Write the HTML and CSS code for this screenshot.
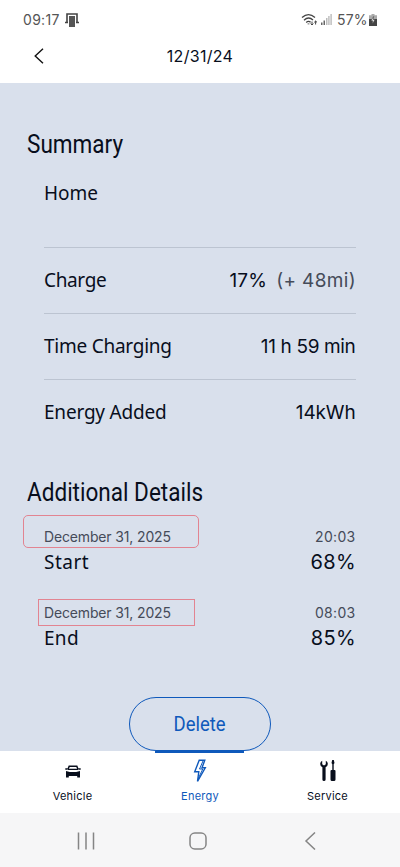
FILE: index.html
```html
<!DOCTYPE html>
<html lang="en">
<head>
<meta charset="utf-8">
<meta name="viewport" content="width=device-width, initial-scale=1">
<title>Charge log</title>
<link rel="stylesheet" href="styles.css">
</head>
<body>
<div class="screen">
  <div class="status">
    <span class="clock">09:17</span>
    <svg class="note" width="14" height="14" viewBox="0 0 14 14"><path d="M2 10V1h10v9M0 9.500h3M11 9.500h3" fill="none" stroke="#444" stroke-width="1.600"/><path d="M4 3h6v11H4z" fill="#555"/></svg>
    <svg class="wifi" width="17" height="14" viewBox="0 0 17 14" fill="none" stroke="#444" stroke-width="1.300"><path d="M1 4.600Q7.500-1.400 14 4.600M3 7.200Q7.500 3 12 7M5.200 9.400Q7.500 7.400 9.600 9.300"/><path d="M7.500 10.500v.8" stroke-width="1.800"/><path d="M11 8.500v3.500m-1.400-1.400L11 12l1.400-1.400M14.600 11.500V8m-1.400 1.400L14.600 8 16 9.400" stroke-width="1"/></svg>
    <svg class="signal" width="11" height="11" viewBox="0 0 11 11"><path d="M0 8.500h1.500V11H0zM2.500 6.500H4V11H2.500z" fill="#666"/><path d="M5 4h1.500v7H5zM7.200 2h1.400v9H7.200zM9.400 0h1.400v11H9.400z" fill="#bbb"/></svg>
    <span class="percent">57%</span>
    <svg class="battery" width="8" height="12" viewBox="0 0 8 12"><path d="M2.500 0h3v1.300H8v4H0v-4h2.500z" fill="#aaa"/><path d="M0 5h8v7H0z" fill="#444"/><path d="M4.600 2.500 2 6.800h1.700l-.4 3L6 5.800H4.300z" fill="#fff" stroke="#444" stroke-width=".6"/></svg>
  </div>
  <header class="bar">
    <svg width="10" height="16" viewBox="0 0 10 16"><path d="M9 .8 1.200 8 9 15.200" fill="none" stroke="#111" stroke-width="1.400"/></svg>
    <h1>12/31/24</h1>
  </header>
  <main>
    <h2 class="summary"><span>Summary</span></h2>
    <section class="rows">
      <div class="row home"><span class="k-home">Home</span></div>
      <div class="row"><span class="k-charge">Charge</span><span class="value"><span class="v-charge">17%</span><span class="miles">(+ 48mi)</span></span></div>
      <div class="row"><span class="k-time">Time Charging</span><span class="v-time">11 h 59 min</span></div>
      <div class="row"><span class="k-energy">Energy Added</span><span class="v-energy">14kWh</span></div>
    </section>
    <h2 class="details"><span>Additional Details</span></h2>
    <section class="events">
      <div class="event">
        <div class="stamp mark-round"><span class="date">December 31, 2025</span><span class="hour">20:03</span></div>
        <div class="level"><span class="k-start">Start</span><span class="v-level">68%</span></div>
      </div>
      <div class="event">
        <div class="stamp mark-square"><span class="date">December 31, 2025</span><span class="hour">08:03</span></div>
        <div class="level"><span class="k-end">End</span><span class="v-level">85%</span></div>
      </div>
    </section>
    <button class="delete"><span>Delete</span></button>
  </main>
  <nav class="tabs">
    <a class="tab"><svg width="16" height="24" viewBox="0 0 16 24"><path d="M3 10.200 4.200 7.200h7.600l1.200 3" fill="none" stroke="#080e1c" stroke-width="1.500"/><path d="M.3 9.300h2.400v1.500H.3zM13.300 9.300h2.400v1.500h-2.400zM3 9.800h10v1.300H3z" fill="#080e1c"/><path d="m1 12 3.800 1h6.400l3.800-1V18.500h-2.800V17H3.800v1.500H1z" fill="#080e1c"/></svg><span class="t-vehicle">Vehicle</span></a>
    <a class="tab active"><svg width="14" height="24" viewBox="0 0 14 24"><path d="M6.200 1.200h5.600L9 8.800h3.300L4.500 22.300l1.300-9.500H1.700z" fill="none" stroke="#0f59bb" stroke-width="1.400"/><path d="m10 2-3.500 8h3.300L5.500 19" fill="none" stroke="#0f59bb" stroke-width="1"/></svg><span class="t-energy">Energy</span></a>
    <a class="tab"><svg width="16" height="24" viewBox="0 0 16 24" fill="#080e1c"><path d="M2.200 1.700v3.500l1.800 1.200 1.800-1.200V1.700q2 1 2 3.300T5.600 8.300V20.500q0 1.600-1.600 1.600t-1.600-1.600V8.300Q.2 7.300.2 5t2-3.300z"/><path d="M12.200 1h1.600l.7 3-.8 1.200V11h.8q1 0 1 1v8.600q0 1.500-1.500 1.500h-2q-1.500 0-1.500-1.500V12q0-1 1-1h.8V5.200L11.500 4z"/></svg><span class="t-service">Service</span></a>
  </nav>
  <footer class="system">
    <svg width="18" height="18" viewBox="0 0 18 18"><path d="M1.500.5v17M9 .5v17M16.500.5v17" stroke="#858585" stroke-width="1.500"/></svg>
    <svg width="18" height="18" viewBox="0 0 18 18"><rect x="1" y="1" width="16" height="16" rx="4.800" fill="none" stroke="#858585" stroke-width="1.500"/></svg>
    <svg width="18" height="18" viewBox="0 0 18 18"><path d="M14 .5 5 9l9 8.500" fill="none" stroke="#858585" stroke-width="1.500"/></svg>
  </footer>
</div>
</body>
</html>
```
FILE: styles.css
```css
*, *::before { box-sizing: border-box; }
body { margin: 0; font-family: Inter, "Liberation Sans", sans-serif; color: #080e1c; }
span { white-space: nowrap; }
svg { display: block; flex: none; }
.screen { width: 400px; height: 867px; display: flex; flex-direction: column; background: #fff; overflow: hidden; }
.status { height: 39px; padding: 0 22px 0 23px; display: flex; align-items: center; font-size: 14px; color: #555; }
.clock { width: 37px; letter-spacing: .3px; }
.note { margin-left: 5px; }
.wifi { margin-left: auto; }
.signal { margin-left: 3px; }
.percent { width: 31px; margin-left: 5px; letter-spacing: .2px; }
.battery { margin-left: 1px; margin-right: 1px; }
.bar { height: 44px; display: grid; grid-template-columns: 66px 1fr 66px; align-items: center; padding-bottom: 10px; }
.bar svg { margin-left: 34px; }
h1 { margin: 0; text-align: center; font-size: 16px; font-weight: 400; line-height: 20px; letter-spacing: .3px; }
main { height: 668px; padding: 46px 44px 0; background: #d9e0ec; display: flex; flex-direction: column; }
h2 { margin: 0 0 0 -17px; height: 30px; font: 400 26px/30px Roboto, sans-serif; }
h2 span { display: inline-block; transform-origin: left; transform: scaleX(.867); }
.row { height: 66px; border-top: 1px solid #bcc4d1; display: flex; justify-content: space-between; align-items: center; font-size: 19px; line-height: 24px; }
.row.home { height: 88px; border: 0; align-items: flex-start; padding-top: 22px; }
.row > span:first-child, .level > span:first-child { font-family: "Noto Sans", sans-serif; }
.row:not(.home) > span:first-child { margin-bottom: 1px; }
.k-charge { letter-spacing: -.35px; }
.k-time { letter-spacing: -.25px; }
.k-energy { letter-spacing: -.2px; }
.k-start { letter-spacing: .5px; }
.k-end { letter-spacing: .3px; }
.v-charge { letter-spacing: .2px; }
.v-time { letter-spacing: -.35px; }
.v-energy { letter-spacing: -.15px; }
.miles { margin-left: 9px; letter-spacing: .35px; color: #454b59; }
.v-time, .v-energy, .hour { margin-right: .5px; }
.v-level { font-size: 20px; letter-spacing: .4px; }
.details { margin-top: 32px; }
.stamp { height: 26px; margin-left: -7px; padding-left: 7px; display: flex; justify-content: space-between; align-items: center; color: #454b59; font-size: 14px; position: relative; }
.date { letter-spacing: -.15px; }
.hour { letter-spacing: .3px; }
.level { display: flex; justify-content: space-between; align-items: center; height: 24px; padding-top: 1px; font-size: 19px; line-height: 24px; }
.event { height: 76px; padding-top: 16px; }
.stamp::before { content: ""; position: absolute; border: 1px solid #e28491; }
.mark-round::before { left: -14px; top: -8px; width: 176px; height: 33px; border-radius: 5px; }
.mark-square::before { left: 1px; top: 0; width: 157px; height: 27px; }
.delete { width: 142px; height: 54px; margin: 38px auto 0; border: 1px solid #0f59bb; border-radius: 27px; background: none; color: #0f59bb; font: 400 21px/24px Roboto, sans-serif; padding: 0; flex: none; }
.delete span { display: inline-block; transform: scaleX(.88); }
.tabs { height: 62px; flex: none; display: grid; grid-template-columns: repeat(3, 127.500px); justify-content: center; }
.tab { display: flex; flex-direction: column; align-items: center; padding-top: 8px; font-size: 11px; line-height: 14px; position: relative; }
.tab span { margin-top: 6px; letter-spacing: .25px; }
.active { color: #0f59bb; }
.active::before { content: ""; position: absolute; left: 19px; top: 0; width: 89px; height: 2px; background: #0f59bb; }
.system { flex: 1; background: #f6f6f7; display: grid; grid-template-columns: repeat(3, 112px); justify-content: center; justify-items: center; align-items: center; padding: 2px 4px 0 0; }
```
